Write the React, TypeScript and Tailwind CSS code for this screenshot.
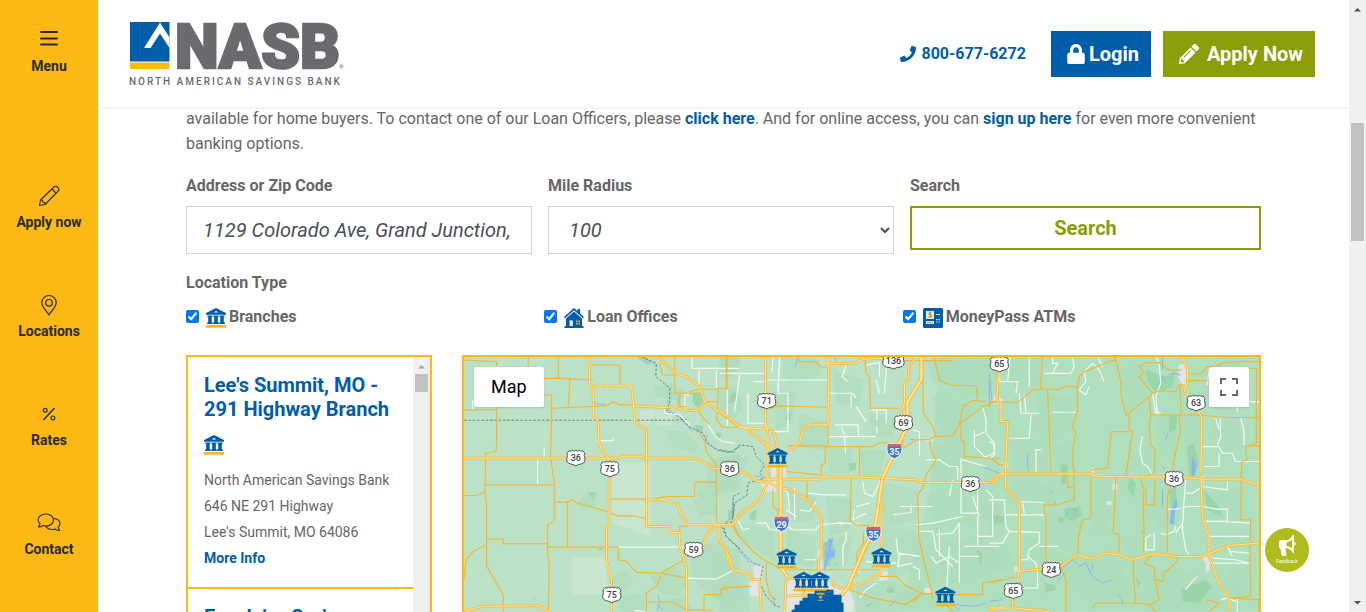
import type { ReactNode } from "react";
import { FaLock, FaPencilAlt, FaPhone } from "react-icons/fa";

/* ---------- Icons ---------- */

function BankShape() {
  return (
    <>
      <path d="M10 0 20 5v1.800H0V5Z" fill="#005daa" />
      <path d="M10 2.800 12.200 4.400H7.800Z" fill="#fff" />
      <path
        d="M1.400 7.400h5v1.500h-.7v5.300h1v1.800H1.200v-1.800h1V8.900h-.8ZM7.500 7.400h5v1.500h-.7v5.300h1v1.800H7.200v-1.800h1V8.900h-.7ZM13.600 7.400h5v1.500h-.8v5.300h1v1.800h-5.500v-1.800h1V8.900h-.7Z"
        fill="#005daa"
      />
      <path d="M0 17h20v2.700H0Z" fill="#fcb813" />
    </>
  );
}

function BankIcon() {
  return (
    <svg viewBox="0 0 20 20" className="size-5 shrink-0" aria-hidden="true">
      <BankShape />
    </svg>
  );
}

function HouseIcon() {
  return (
    <svg viewBox="0 0 20 20" className="size-5 shrink-0" aria-hidden="true">
      <path d="M0 9 10 0l3.500 3V1h2.600v4.400L20 9l-1 1.200-9-8-9 8Z" fill="#005daa" />
      <path d="m2 10.400 8-7 8 7V18h1.500v2H.5v-2H2Z" fill="#005daa" />
      <path d="M5.600 12.400h3.200V18H5.600Z" fill="#fff" />
      <path d="M12 12.400h1.600V14H12ZM14.400 12.400H16V14h-1.600ZM12 14.800h1.600v1.600H12ZM14.400 14.800H16v1.600h-1.600Z" fill="#fcb813" />
    </svg>
  );
}

function AtmIcon() {
  return (
    <svg viewBox="0 0 20 20" className="size-5 shrink-0" aria-hidden="true">
      <rect width="20" height="20" rx="1.500" fill="#005daa" />
      <path d="M3 3h8v8H3ZM3 13h8v3H3ZM13 6h4v1h-4ZM13 11h1.500v1.200H13ZM15.500 11H17v1.200h-1.500ZM13 13.400h1.500v1.200H13ZM15.500 13.400H17v1.200h-1.500Z" fill="#dfe9ef" />
      <path d="M8.800 4.800H6v2.100h2.600V9H5.400M7.200 3.600v6.600" stroke="#c79a2b" strokeWidth="1" fill="none" />
      <path d="M4 14h6v1.200H4Z" fill="#d8a62a" />
    </svg>
  );
}

function SideIcon({ children, className }: { children: ReactNode; className: string }) {
  return (
    <svg
      viewBox="0 0 24 24"
      fill="none"
      stroke="#2b2b2b"
      strokeLinecap="round"
      strokeLinejoin="round"
      className={className}
      aria-hidden="true"
    >
      {children}
    </svg>
  );
}

function MenuIcon() {
  return (
    <SideIcon className="size-6">
      <path d="M4 6h16M4 12.500h16M4 18.500h16" strokeWidth="2" />
    </SideIcon>
  );
}

function PencilIcon() {
  return (
    <SideIcon className="size-6">
      <path d="m2.500 21.500 1-5.500L17 3a2.400 2.400 0 0 1 3.300 0l.8.800a2.400 2.400 0 0 1 0 3.300L8 20.500ZM15 5l4 4.200M3.500 16l2 .3.300 2 2 .2.200 2" strokeWidth="1.100" />
    </SideIcon>
  );
}

function PinIcon() {
  return (
    <SideIcon className="size-6">
      <path d="M12 22c-1.500-3-7.200-8-7.200-12.300a7.200 7.200 0 0 1 14.400 0C19.200 14 13.500 19 12 22Z" strokeWidth="1.200" />
      <circle cx="12" cy="9.800" r="3.300" strokeWidth="1.200" />
    </SideIcon>
  );
}

function PercentIcon() {
  return (
    <SideIcon className="size-6">
      <path d="M17.200 6.500 6.800 17.500" strokeWidth="1.600" />
      <circle cx="8.200" cy="8.200" r="1.900" strokeWidth="1.200" />
      <circle cx="15.900" cy="15.900" r="1.900" strokeWidth="1.200" />
    </SideIcon>
  );
}

function ChatIcon() {
  return (
    <SideIcon className="size-6">
      <path d="M2.300 16c-.8 0-1-.4-.5-.8.800-.8 1.100-1.500 1.200-2.600C1.700 11.500 1 10.300 1 9c0-3.400 3.400-6 7.800-6s7.700 2.600 7.700 6-3.300 6-7.700 6c-1 0-2-.1-2.900-.4-1.200.9-2.200 1.400-3.600 1.400Z" strokeWidth="1.100" />
      <path d="M16.700 7.500c3.700.3 6.300 2.400 6.300 5.200 0 1.300-.7 2.500-1.900 3.500.1 1 .5 1.800 1.200 2.500.4.400.2.800-.4.800-1.400 0-2.500-.5-3.600-1.400-.8.200-1.700.4-2.800.4-3 0-5.500-1.300-6.600-3.300" strokeWidth="1.100" />
    </SideIcon>
  );
}

function MegaphoneIcon() {
  return (
    <svg viewBox="0 0 18 22" className="h-[22px] w-[18px]" fill="none" stroke="#fff" aria-hidden="true">
      <path d="M1.500 6.500q0-1 1-1H8v7H6.800L8 20.500H4.200L3 13.500l-1.500-1Z" fill="#fff" strokeWidth="1" />
      <path d="M7.500 6.500c3 0 5.500-1.500 7.500-5v14.800c-2-3-4.500-4.300-7.500-4.300" strokeWidth="1.800" />
      <path d="M16.500 7.200v3" strokeWidth="2" />
    </svg>
  );
}

function Logo() {
  return (
    <svg viewBox="0 0 216 70" className="h-[70px] w-[216px] overflow-visible" role="img" aria-label="NASB North American Savings Bank">
      <path d="M1 3h39.500v39.500H1Z" fill="#005daa" />
      <path d="M1 43.500h39.500V50H1Z" fill="#fcb813" />
      <path d="M31 3.500 15 29h6.500l9.500-14.500L40.500 29V18.500Z" fill="#fff" />
      <text
        x="46"
        y="49"
        fontFamily="Roboto, sans-serif"
        fontWeight="900"
        fontSize="62"
        fill="#6a6b6e"
        stroke="#6a6b6e"
        strokeWidth="2.500"
      >
        NASB
      </text>
      <text x="210" y="50" fontFamily="Roboto, sans-serif" fontSize="6" fill="#6a6b6e">
        ®
      </text>
      <text x="0" y="66" fontFamily="Roboto, sans-serif" fontWeight="500" fontSize="10" fill="#6a6b6e" className="tracking-[2px]">
        NORTH AMERICAN SAVINGS BANK
      </text>
    </svg>
  );
}

/* ---------- Map drawing ---------- */

type Sheet = {
  origin: string;
  highways: string;
  roads: string;
  streets: string;
  borders: string;
  water: string;
  towns: string;
  woods: string;
  forest: string;
};

const sheets: Sheet[] = [
  {
    origin: "translate(460 350) scale(0.33333)",
    highways:
      "M12 325H470L490 319H540L560 325H700L720 330L760 355L800 358 M387 20L390 100L400 120V195L415 215L417 270L425 300L448 328V520L440 530V630L455 690V786 M398 108H515L518 130L525 215L560 240V530H630V548H658L660 590L672 630L680 650V786 M560 450H620L652 462L665 495L685 525H790L822 527L840 490 M522 168L620 173L640 170L680 182L715 180L735 155 M595 20L650 72L680 80L720 110L735 155L840 230 M730 590Q740 540 775 525 M778 525V575L795 590L805 635L825 660L840 665 M12 785L70 770L235 768L270 786",
    roads:
      "M12 30L110 35V275L108 305L77 310L75 425L80 465V650L130 735V786 M12 180H110 M75 405H283 M12 437H50L75 425 M205 20V60 M295 20V85L400 90 M252 85H330L325 170 M252 135H275V200L272 320L283 400V515L263 525V610L268 640L265 780 M275 175L440 168L460 155L480 165H520 M392 45H480V105 M283 457H323L340 450L350 458L448 487 M323 457V592 M452 448H560 M455 490L470 498H520L560 506 M80 568H130V582H263 M12 690L18 630L40 605L80 585 M263 592H475V630L500 635L530 668L600 670L680 685 M675 630L610 665L590 710L560 730V786 M560 757H640L680 780L760 782 M733 786V735H780L790 712H840 M600 40L608 75H650 M645 20V130H715 M690 125L715 118H775V155 M660 130V170H680 M735 155H775L770 210L790 232H840 M715 180L730 205L750 222 M720 250L735 275L740 305L770 345V510L775 525 M770 397H705V440H620L580 448 M802 20V115H775 M822 527L825 540L840 565 M660 565V530H685",
    streets:
      "M253 292V320 M233 327V405 M38 150V180 M410 272H460V262 M475 592H672 M680 685L770 688L790 678L825 660 M697 20V55H840 M718 60V115 M770 60V115 M675 180V135H690 M615 175V190L660 195L690 225 M745 225L770 262L790 275L825 280 M803 120V230 M525 782L555 786",
    borders:
      "M12 211H640L680 208 M545 20L590 40L588 80L630 115V160L620 185L660 200L690 232L730 250L740 275L770 300L810 308L840 290 M840 597L800 560L785 530L820 500V440L840 430",
    water:
      "M550 25L575 35L590 50 M400 160L440 165 M622 150L628 180L650 195L700 245 M705 165L715 155 M415 600L430 597 M220 745L226 748 M595 735L600 760L592 785 M590 765L610 780 M740 255V280L775 300 M822 455V500 M825 580L840 597 M655 145V165",
    towns: "M455 338H573V560L455 518Z M335 623H440V735H335Z M540 180H590L570 228H540Z M590 182H640V228H590Z",
    woods:
      "M620 240L680 245L720 290L700 310L640 290Z M580 110L640 100L690 135L640 150L590 140Z M750 330L840 310V420L780 430L730 460L710 430L740 400Z M350 460L380 425L415 430L405 470L370 480Z M460 680L500 660L520 700L480 740L455 720Z M570 680L650 650L680 700L660 740L600 730Z M690 600L760 580L840 600V740L790 760L740 730L700 690Z M480 740L560 730L550 786H480Z M780 20H840V60L800 80L780 60Z M600 750L680 740L700 786H600Z M700 450L760 430L770 490L720 500Z",
    forest: "M700 130L730 125L735 150L715 175L698 155Z M705 225L730 228L728 250L708 245Z M765 250L785 250L780 270Z M530 20L560 20L575 40L560 45Z M385 430L410 425L400 450Z",
  },
  {
    origin: "translate(720 350) scale(0.33333)",
    highways:
      "M0 183L60 230L85 238L140 285L175 300 M138 20V225L145 245V385L150 400 M135 225L165 250L175 300V410 M60 232L145 238 M205 305L240 280L250 240L270 225H325L328 60L320 20 M60 367L80 370L110 393L140 398 M130 388L300 388L310 381H420L480 385L590 390L600 398H825L840 378 M183 345V650L205 680L235 692 M150 400L180 415L210 417L270 455L305 505V620L297 635V680 M145 395L120 450L85 475L55 500L42 525H0 M0 575L20 600L40 660L90 672L95 690H120L125 786 M605 20V85L565 155V230L545 260L525 310L490 385L465 540L440 595L385 715L360 745 M585 30L568 50V85L555 100V160L545 185L548 240 M485 400V670L440 695L375 720 M195 786L200 680 M200 740L270 735 M240 690L265 760 M320 40H400L430 28L490 25 M835 70V150 M330 690L345 710L385 720",
    roads:
      "M42 525L60 560L100 605L140 635L180 655 M235 20L240 35H290L300 50L320 52 M555 32H700 M435 20L440 70L450 80L453 175H540 M610 20L612 190L640 230L650 262 M645 25L660 90L690 105L770 108L775 150 M550 295L590 270L630 268L650 260L700 258L720 225L730 170L760 152L800 155 M720 222L790 170L840 150 M725 225V270L735 275V320L840 327 M630 268L635 300L650 330L620 375L610 415L595 435L598 560L610 620L635 720L640 750 M150 180L165 168L325 172 M205 288H320 M325 225V290 M305 378V345L317 340V290H460L480 278L510 280V310 M420 290V380 M395 385L392 515L410 525L460 530 M160 420V470L175 480V510 M263 395V450 M200 365L300 375 M200 660H480 M480 680H530L555 705L605 730L580 760 M390 720L460 745L560 765L605 732H640 M140 640V690L150 735L170 750 M0 720L50 712L95 710 M680 765L700 786 M650 735H790V700L840 690 M432 545V580L412 610V680 M20 20V115 M550 210V295",
    streets:
      "M0 70H137 M60 75L45 185 M85 130V220H137 M140 90H325 M160 20L157 65 M180 20L175 130H205V245H150 M380 45L368 80L385 95 M330 130H400L410 145 M395 130V172 M330 172L325 180 M440 45L480 38V80 M470 90L480 130 M455 180H500V220 M472 180V210 M472 230V250 M345 225H415L418 260H470 M365 230L375 255L378 310 M330 260H420 M410 170L440 215 M580 240L600 245V320 M620 330H660L690 350H715V390 M765 240V290L800 325 M765 260L800 245V210L790 170 M800 250L825 280V310L790 325 M700 390L690 440 M725 325V490H775V400 M760 440L780 500 M540 470H640 M520 495L575 488V465 M590 525L640 520L730 500 M600 545H640L650 600L700 650 M650 555L700 550L720 520V700 M635 620L650 640L690 620L720 640 M690 590L680 740 M720 620H780 M735 590H840 M775 500V590 M800 420L820 440V560H775 M660 540V620 M530 565L535 610L600 620 M540 610L535 650L580 640 M500 640L530 640 M190 410L205 430L210 480 M225 415V510 M240 480L270 485L290 455 M265 430L310 435H380 M190 520L220 540H290L300 525L360 520L420 522 M50 505L70 540L90 535 M110 520H140L150 540H180 M380 545V570L370 590V650 M255 630H290 M230 500L200 480 M405 480L400 510L440 490 M430 395L435 430L460 440L480 400 M410 470L450 460 M420 745L440 720L470 700 M600 690V660L580 650 M440 635L480 640 M500 20V60L495 130 M730 330L800 350 M100 95H140 M330 100H325",
    borders:
      "M0 300L40 308L60 285L100 290L110 320L135 345L120 370L135 385L85 400L82 435L45 460L38 515L10 525L20 560L60 600L100 640L130 650L120 700L140 740L165 765L185 775",
    water:
      "M318 580L325 620L320 650 M340 565L330 610 M325 600L340 610 M570 270L585 268 M105 378L125 380 M40 460V500 M160 740L165 770 M345 640L355 650 M690 760L720 780 M510 770L530 750 M705 765L770 770L800 760 M440 770L460 760 M810 90V170 M790 350L840 370 M60 605L90 640 M225 50L235 25 M345 20L355 45",
    towns: "M120 395H175L170 425H135Z M100 650L130 645L125 690L120 740H90V700L105 685Z M230 680L330 690L360 720H390L405 760L400 786H200V700Z M480 665H505V690L480 695Z M295 600H307V660H293Z M398 650L425 660L410 680Z M155 350H200V385H155Z M475 385L490 395L480 408Z M620 265H640V275H620Z M615 715H635V730H615Z M358 512L375 520L362 530Z M825 135H840V160H820Z",
    woods:
      "M0 20H60L40 80L0 90Z M190 20L300 30V80L220 100L190 80Z M340 60L430 90L420 170L350 160Z M450 190L540 200L520 260L460 260Z M0 120L50 110L70 180L40 210L0 190Z M160 120L230 130L215 220L170 240Z M240 190L330 220L310 300L240 290Z M0 330L90 320L60 380L20 400L0 390Z M200 420L290 440L280 510L220 520Z M320 290L400 300L390 370L330 370Z M420 300L500 300L480 380H430Z M620 30L840 20V130L760 140L690 90L640 100Z M640 140L760 170L710 250L660 250Z M640 290L720 260L740 330L700 390L640 380Z M500 400L600 420L590 510L500 530L480 450Z M320 440L400 450L390 540L330 560Z M50 520L160 540L170 640L110 600L60 580Z M200 540L290 560L285 650L200 640Z M620 430L740 440L760 520L650 540Z M490 530L590 540L600 650L520 690L490 640Z M650 580L790 560L840 650L760 700L660 700Z M0 610L80 680L90 786H0Z M410 700L520 690L600 740L540 786H410Z M340 560L400 560L380 650L330 660Z M760 400L840 420V520L780 500Z",
    forest: "M310 580L335 570L345 600L330 650L312 640Z M35 130L50 125L48 155L25 160Z M205 185L215 190L210 210L195 208Z M390 340L410 338L408 360L390 365Z M25 480L45 478L40 510L25 505Z M90 490L110 480L108 510H90Z M825 500H840V530L822 525Z M500 715L520 712L525 730H505Z M770 600L790 610L785 650Z",
  },
  {
    origin: "translate(990 350) scale(0.33333)",
    highways:
      "M28 60L22 150L35 160V215H55L48 370V415L90 455V665L80 720L70 740V770 M0 775L80 775L180 786 M0 400L30 372H300L330 380L560 382L610 385L640 388H755L810 408 M82 665L160 658L215 650L240 630L265 615L310 628L345 610L390 615L430 630L490 612L560 620H640L690 600L720 587L810 580 M580 20L595 60V100L585 120L625 180L637 200L636 385L640 500L660 560V620L690 700L720 745V786 M0 785L40 770",
    roads:
      "M0 155L85 158L130 120L155 118V90L160 20 M155 118H210L230 108L265 112L270 80L285 65L380 28L375 20 M265 112V180L248 235L260 245L252 290L250 330L255 370V450L205 465H165V490L170 500V640 M175 122L185 365 M380 28L395 95V130L410 195H420V240L430 245L410 378 M366 245H420 M366 245L355 355L305 360L300 370 M420 190L480 140L490 130L450 80L465 70L450 50L470 38H510L540 60H580 M490 130L515 122L560 125L570 105H600 M480 140L485 195L480 230L485 285L498 300L495 370L455 385L460 410L470 420V465H495L498 390 M485 195L570 195L575 240L555 330L550 370L545 410L535 440V610 M570 195H625L700 202L810 203 M572 105L577 195 M595 72H635L655 50L680 50L700 38L750 35H810 M595 92H660 M780 55H802V280L770 290L775 330L758 335L755 510H785L783 590L785 740L720 745 M810 288H770 M305 380V505L280 510L268 560L265 615 M380 382L372 550L390 555V610 M463 420V500L465 550L462 610 M433 630V680L440 760L320 760L310 775 M490 615L465 640L495 655L498 690L520 695L525 670L565 635V620 M498 690L510 750L480 765L440 760 M215 650L230 690V786 M0 700L75 682 M480 765L500 786 M720 745L810 750V786 M650 750L690 760L660 786 M0 325L20 335L28 345H45 M235 372V412H252 M600 390V370",
    streets:
      "M30 20V90L28 95H85L80 130 M62 20L55 95 M120 20V110 M90 130L95 190H150 M105 135L110 190 M125 195L120 265H60 M140 365V300H155 M190 187H260 M165 70H245L255 50L250 25 M190 70L205 40H190V20 M285 65L290 95L270 120L290 135L300 110 M285 65L310 40L330 60L345 95 M325 20L340 50 M460 258L452 300L460 340L475 350L490 375 M500 20L510 40L515 100L500 140L505 190 M490 130L500 190 M640 290H690L700 310H730L740 335H810 M693 205L695 260L685 285 M755 205L765 240V285 M690 310V350L645 350 M90 455L165 458 M50 495H165 M0 450H45L50 530L60 545L150 548V580L120 600L115 630H95 M60 545L40 580H0 M115 620L140 640L145 670V715H105 M150 590H205 M590 390L585 450L580 540L590 600L600 615 M590 430H610L640 410L715 420V395 M535 478H560L600 470H640L680 478H715V515H650 M560 550L580 520 M515 550L530 555L555 545L560 530 M495 550V600L470 600V565L485 555 M655 560H780 M700 515L785 520 M670 625L740 630L780 640 M665 640L780 640 M715 590L725 605L780 610 M730 620L715 590 M590 720L610 695L625 680 M745 745V786 M695 750L715 745L740 755 M0 275L15 285V315L5 325 M100 460L105 490 M745 120V185 M655 105L660 60 M740 155H810 M680 205L690 240",
    borders: "",
    water:
      "M545 520L548 480L562 455L555 490L545 520 M610 320V380L618 340 M225 480L235 490L228 495 M250 478L262 482L255 495 M180 420L190 430 M520 420V470 M210 665L250 630L270 650L290 640L310 680L340 700L370 690 M455 550L468 535 M515 75L525 90 M550 70L575 75 M520 20V60 M530 270L535 250 M115 310V350L118 365 M195 455L200 465 M385 735L400 750V765 M0 755L40 750 M520 350L528 360 M205 695L225 670 M310 640V660 M0 70L8 150",
    towns: "M568 45L585 42L598 70V110H585L568 85Z M40 340H58L48 370Z M370 402H385V420H370Z M300 355H315V368H300Z M650 610H668L660 665H650V640L640 625Z M630 380H648L640 410Z M75 650H90V668H75Z M15 145H40V160H15Z M350 455H368V465H350Z M500 185H515V195H500Z",
    woods:
      "M60 20H160L150 110L80 120L60 80Z M140 130L250 140L245 230L190 270L150 230Z M430 40L480 60L470 130L430 160L400 120Z M60 270L170 280L180 360L70 360Z M190 270L250 300V360L190 360Z M500 200L570 210L550 300L500 290Z M590 200L630 210V330L590 340Z M640 60L760 180L700 200L640 130Z M60 390L160 400L240 430L180 460L100 450Z M0 460L40 470L40 560H0Z M180 500L260 470L290 540L220 600L180 570Z M310 400L370 420L360 540L310 540Z M480 440L540 400L580 420L570 520L500 540Z M640 430L750 410V520L650 500Z M180 610L260 620L400 640L420 740L300 750L230 690Z M450 680L560 650L640 680L700 740L640 786H480Z M670 560L780 540V600L670 590Z M720 640L780 650V740L730 730Z M110 560L170 580L165 640L110 620Z M660 210L750 220L760 300L700 300Z M440 320L480 310L490 370L440 370Z M400 560L450 570V620L400 610Z M0 600L70 610V660L0 670Z M680 20L780 30L770 60L700 60Z",
    forest: "M215 345L235 345L230 400L215 405Z M230 475L270 470L280 495L250 515L225 505Z M540 200L565 195L560 240L540 250Z M595 290L615 280L630 340L610 390L600 370Z M470 60L530 80L560 60L550 110L500 130L475 95Z M575 720L650 690L670 710L630 760L580 755Z M165 700L195 705L200 720L170 728Z M420 375L440 400L435 440L415 420Z M540 420L560 410L565 460L545 480Z M205 500L225 505L222 520L205 515Z M645 420L690 470L700 500L655 480Z M10 495L45 500L40 520H10Z M440 680L455 700L445 715Z",
  },
];

const usRoutes: [number, number, string][] = [
  [576, 458, "36"],
  [610, 469, "75"],
  [730, 469, "36"],
  [694, 550, "59"],
  [612, 595, "75"],
  [767, 401, "71"],
  [894, 361, "136"],
  [904, 423, "69"],
  [971, 484, "36"],
  [1000, 364, "65"],
  [1197, 403, "63"],
  [1175, 479, "36"],
  [1052, 570, "24"],
  [1014, 591, "65"],
];

const interstates: [number, number, string][] = [
  [895, 451, "35"],
  [782, 524, "29"],
  [874, 534, "35"],
];

const branchPins: [number, number][] = [
  [768, 448],
  [777, 549],
  [872, 548],
  [936, 587],
  [794, 572],
  [810, 572],
];

function MapDrawing() {
  return (
    <svg viewBox="464 357 796 256" className="block w-full" role="img" aria-label="Map of branches around Kansas City">
      <path d="M464 357h796v256H464Z" fill="#bbe2c6" />
      <path d="M940 357h320v256H900l30-120Z" fill="#b0dfbe" />
      {sheets.map((s) => (
        <g key={s.origin} transform={s.origin} fill="none" strokeLinejoin="round">
          <path d={s.woods} fill="#aedcba" opacity="0.7" />
          <path d={s.forest} fill="#93d3a4" opacity="0.8" />
          <path d={s.towns} fill={s.origin.includes("460") ? "#c8e5cf" : "#e2e5e6"} />
          <path d={s.water} stroke="#8ab4f8" strokeWidth="3" />
        </g>
      ))}
      <path d="m829 538 4 2-2 9 3 3 2-3-1 8-6 2-4 12h-1l2-14-1-7 3 4Z" fill="#8ab4f8" />
      <path d="m1177 500-5 10-1 14h4l1-13 3-7ZM1194 457l-1 19h3l1-12Z" fill="#8ab4f8" />
      {sheets.map((s) => (
        <g key={s.origin} transform={s.origin} fill="none" strokeLinejoin="round">
          <path d={s.borders} stroke="#6d8577" strokeWidth="3" strokeDasharray="8 5" />
          <path d={s.streets} stroke="#f4faf5" strokeWidth="3.500" />
          <path d={s.roads} stroke="#f2b632" strokeWidth="3.500" />
        </g>
      ))}
      {sheets.map((s) => (
        <g key={s.origin} transform={s.origin} fill="none" strokeLinejoin="round">
          <path d={s.highways} stroke="#f8bb37" strokeWidth="8" />
          <path d={s.highways} stroke="#fde7a4" strokeWidth="3" />
        </g>
      ))}
      <g fill="none" strokeLinejoin="round">
        <path d="M922 357v22l-14 23v24l-13 27-12 25-8 52-10 18-17 40-8 10M781 465v102l7 10" stroke="#f8bb37" strokeWidth="4" />
        <path d="M922 357v22l-14 23v24l-13 27-12 25-8 52-10 18-17 40-8 10M781 465v102l7 10" stroke="#fde7a4" strokeWidth="2" />
      </g>
      {usRoutes.map(([x, y, label]) => (
        <g key={`${x}-${y}`} transform={`translate(${x} ${y})`}>
          <path
            d={
              label.length > 2
                ? "M-9-7q2 1 4-.5 2.500 1.500 5 0 2.500 1.500 5 0 2 1.500 4 .5l1.500 2.500q-1.500 2 0 4.500 1 5-3.500 6Q2.500 6.500 0 8-2.500 6.500-7 6q-4.500-1-3.500-6 1.500-2.500 0-4.500Z"
                : "M-7-7q2 1 3.500-.5Q-1.500-6 0-7.500 1.500-6 3.500-7.500 5-6 7-7l2 2.500q-1.500 2 0 4.500 1 5-3.500 6Q2.500 6.500 0 8-2.500 6.500-5.500 6-10 5-9 0q1.500-2.500 0-4.500Z"
            }
            fill="#fff"
            stroke="#4c4f51"
            strokeWidth="1"
          />
          <text y="3.500" textAnchor="middle" fontFamily="Roboto, sans-serif" fontWeight="500" fontSize="9" fill="#3c4043">
            {label}
          </text>
        </g>
      ))}
      {interstates.map(([x, y, label]) => (
        <g key={`${x}-${y}`} transform={`translate(${x} ${y})`}>
          <path d="M-6-7.500Q-3-6 0-7.500 3-6 6-7.500 9-3 7 2 5 6.500 0 8-5 6.500-7 2-9-3-6-7.500Z" fill="#3e78d0" stroke="#fff" strokeWidth="1" />
          <path d="M-6-7.500Q-3-6 0-7.500 3-6 6-7.500L7.500-4.300h-15Z" fill="#dd5f5c" />
          <text y="4" textAnchor="middle" fontFamily="Roboto, sans-serif" fontWeight="700" fontSize="9" fill="#fff">
            {label}
          </text>
        </g>
      ))}
      {branchPins.map(([x, y]) => (
        <g key={`${x}-${y}`} transform={`translate(${x} ${y})`}>
          <BankShape />
        </g>
      ))}
      <path d="M792 613v-3h3v-5h5v-4h3v-3h5v-4h7v-3h12v-1h7v5h8v8h2v10Z" fill="#005daa" />
      <path d="M817 593h8v2h-8ZM819 596h4l-1 3h-2ZM818 600h6v1h-6Z" fill="#caa53b" />
    </svg>
  );
}

/* ---------- Page ---------- */

function NavItem({ label, icon }: { label: string; icon: ReactNode }) {
  return (
    <a href="#" className="flex h-[109px] shrink-0 flex-col items-center gap-1">
      {icon}
      <span className="text-sm leading-5 font-bold text-[#2b2b2b]">{label}</span>
    </a>
  );
}

function TypeOption({ label, icon }: { label: string; icon: ReactNode }) {
  return (
    <label className="flex items-center leading-6 font-bold">
      <input type="checkbox" defaultChecked className="mr-[7px] mb-0.5 size-[13px]" />
      <span className="mt-0.5 mr-[3px]">{icon}</span>
      {label}
    </label>
  );
}

function Scrollbar({ thumb, arrow, down }: { thumb: string; arrow: string; down?: boolean }) {
  return (
    <div className="flex w-[17px] shrink-0 flex-col items-center bg-[#f0f0f0]" aria-hidden="true">
      <svg viewBox="0 0 17 17" className="size-[17px] shrink-0">
        <path d="M5 11.500 8.500 8l3.500 3.500Z" fill={arrow} />
      </svg>
      <div className={thumb} />
      {down && (
        <svg viewBox="0 0 17 17" className="mt-auto size-[17px] shrink-0">
          <path d="M5 6h7L8.500 9.500Z" fill="#505050" />
        </svg>
      )}
    </div>
  );
}

type Branch = { name: string; lines: string[] };

const branches: Branch[] = [
  {
    name: "Lee's Summit, MO - 291 Highway Branch",
    lines: ["North American Savings Bank", "646 NE 291 Highway", "Lee's Summit, MO 64086"],
  },
  {
    name: "Excelsior Springs, MO Branch",
    lines: ["North American Savings Bank", "1001 N Jesse James Road", "Excelsior Springs, MO 64024"],
  },
];

function BranchCard({ branch }: { branch: Branch }) {
  return (
    <article className="border-b-2 border-[#fcb813] p-4">
      <h2 className="mb-3.5 text-xl leading-6 font-bold text-[#005daa]">{branch.name}</h2>
      <BankIcon />
      <div className="mt-3 text-sm leading-[26px]">
        {branch.lines.map((line) => (
          <p key={line}>{line}</p>
        ))}
        <a href="#" className="font-bold text-[#005daa]">
          More Info
        </a>
      </div>
    </article>
  );
}

export default function App() {
  return (
    <div className="flex h-screen overflow-hidden bg-white font-['Roboto',sans-serif] text-base text-[#666666]">
      <nav className="flex w-[98px] shrink-0 flex-col bg-[#fcb813] pt-[26px]">
        <button type="button" className="mb-[108px] flex shrink-0 flex-col items-center gap-1.5">
          <MenuIcon />
          <span className="text-sm leading-5 font-bold text-[#2b2b2b]">Menu</span>
        </button>
        <NavItem label="Apply now" icon={<PencilIcon />} />
        <NavItem label="Locations" icon={<PinIcon />} />
        <NavItem label="Rates" icon={<PercentIcon />} />
        <NavItem label="Contact" icon={<ChatIcon />} />
      </nav>

      <div className="flex min-w-0 flex-1 flex-col">
        <header className="z-10 flex h-[109px] shrink-0 items-center justify-between border-b-2 border-[#f5f5f5] bg-white pr-[34px] pl-[31px]">
          <a href="#">
            <Logo />
          </a>
          <div className="flex items-center">
            <a href="#" className="mr-[25px] flex items-center gap-1.5 font-bold text-[#005daa]">
              <FaPhone className="size-4" />
              800-677-6272
            </a>
            <a href="#" className="mr-3 flex h-[46px] items-center gap-1 bg-[#005daa] px-3 pl-4 text-xl font-bold text-white">
              <FaLock className="h-5 w-[18px]" />
              Login
            </a>
            <a href="#" className="flex h-[46px] items-center gap-2 bg-[#8a9e0a] pr-3 pl-4 text-xl font-bold text-white">
              <FaPencilAlt className="size-5" />
              Apply Now
            </a>
          </div>
        </header>

        <main className="-mt-[3px] min-h-0 flex-1 overflow-hidden px-[88px]">
          <p className="mb-[18px] leading-[25px]">
            available for home buyers. To contact one of our Loan Officers, please{" "}
            <a href="#" className="font-bold text-[#005daa]">
              click here
            </a>
            . And for online access, you can{" "}
            <a href="#" className="font-bold text-[#005daa]">
              sign up here
            </a>{" "}
            for even more convenient banking options.
          </p>

          <form onSubmit={(e) => e.preventDefault()}>
            <div className="grid grid-cols-[346fr_346fr_351fr] items-start gap-4">
              <div>
                <label htmlFor="address" className="mb-2 block leading-6 font-bold">
                  Address or Zip Code
                </label>
                <input
                  id="address"
                  type="text"
                  defaultValue="1129 Colorado Ave, Grand Junction,"
                  className="h-12 w-full border border-[#ced4da] px-4 text-xl text-[#495057] italic"
                />
              </div>
              <div>
                <label htmlFor="radius" className="mb-2 block leading-6 font-bold">
                  Mile Radius
                </label>
                <select
                  id="radius"
                  defaultValue="100"
                  className="h-12 w-full border border-[#ced4da] bg-white pl-4 text-xl text-[#495057] italic"
                >
                  <option>25</option>
                  <option>50</option>
                  <option>100</option>
                </select>
              </div>
              <div>
                <label htmlFor="search" className="mb-2 block leading-6 font-bold">
                  Search
                </label>
                <button id="search" type="submit" className="h-11 w-full border-2 border-[#8a9e0a] text-xl font-bold text-[#8a9e0a]">
                  Search
                </button>
              </div>
            </div>

            <fieldset className="mt-[17px]">
              <legend className="leading-6 font-bold">Location Type</legend>
              <div className="mt-2.5 grid grid-cols-3">
                <TypeOption label="Branches" icon={<BankIcon />} />
                <TypeOption label="Loan Offices" icon={<HouseIcon />} />
                <TypeOption label="MoneyPass ATMs" icon={<AtmIcon />} />
              </div>
            </fieldset>
          </form>

          <div className="mt-[26px] grid grid-cols-[246px_minmax(0,1fr)] gap-[30px]">
            <section className="flex h-[600px] overflow-hidden border-2 border-[#fcb813]">
              <div className="min-w-0 flex-1">
                {branches.map((b) => (
                  <BranchCard key={b.name} branch={b} />
                ))}
              </div>
              <Scrollbar thumb="h-[18px] w-[13px] bg-[#c1c1c1]" arrow="#a3a3a3" />
            </section>
            <section className="relative h-[600px] overflow-hidden border-2 border-[#fcb813] bg-[#b5e0c1]">
              <MapDrawing />
              <button
                type="button"
                className="absolute top-2.5 left-2.5 h-10 rounded-xs bg-white px-[17px] text-lg text-black shadow"
              >
                Map
              </button>
              <button
                type="button"
                aria-label="Toggle fullscreen view"
                className="absolute top-2.5 right-2.5 flex size-10 items-center justify-center rounded-xs bg-white shadow"
              >
                <svg viewBox="0 0 18 18" className="size-[18px]" fill="none" stroke="#666" strokeWidth="2">
                  <path d="M1 6V1h5M12 1h5v5M17 12v5h-5M6 17H1v-5" />
                </svg>
              </button>
            </section>
          </div>
        </main>
      </div>

      <Scrollbar thumb="mt-[106px] h-[118px] w-[13px] bg-[#c1c1c1]" arrow="#505050" down />

      <button
        type="button"
        className="fixed right-[57px] bottom-10 z-20 flex size-11 flex-col items-center justify-center rounded-full bg-[#b0bc1e] text-white"
      >
        <MegaphoneIcon />
        <span className="text-[5px] leading-[8px]">Feedback</span>
      </button>
    </div>
  );
}
